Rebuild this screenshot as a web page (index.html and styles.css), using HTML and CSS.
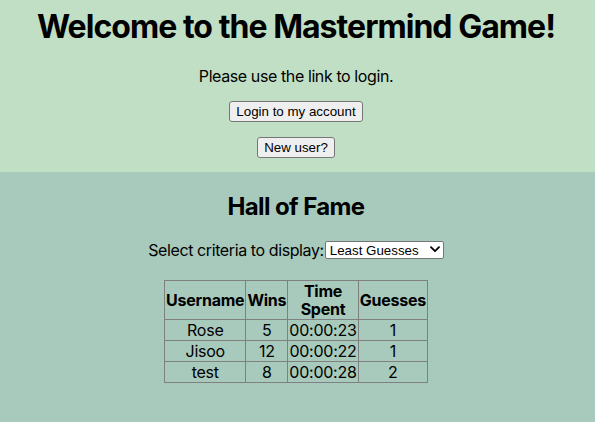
FILE: index.html
```html
<!DOCTYPE html>
<html lang="en">
<head>
<meta charset="utf-8">
<title>Mastermind</title>
<link rel="stylesheet" href="styles.css">
</head>
<body>
<div class="page">
  <header class="welcome">
    <h1 class="title">Welcome to the Mastermind Game!</h1>
    <p class="intro">Please use the link to login.</p>
    <button class="btn" type="button">Login to my account</button>
    <button class="btn" type="button">New user?</button>
  </header>
  <section class="fame">
    <h2 class="fame-title">Hall of Fame</h2>
    <div class="criteria">
      <label class="criteria-label" for="crit">Select criteria to display:</label>
      <span class="select-wrap">
        <select class="select" id="crit">
          <option>Least Guesses</option>
          <option>Most Wins</option>
          <option>Least Time</option>
        </select>
        <svg class="chev" width="10" height="7" viewBox="0 0 10 7" aria-hidden="true"><path d="M1 1.2 L5 5.2 L9 1.2" fill="none" stroke="#000" stroke-width="1.8" stroke-linecap="round" stroke-linejoin="round"/></svg>
      </span>
    </div>
    <table class="scores">
      <thead>
        <tr><th>Username</th><th>Wins</th><th>Time Spent</th><th>Guesses</th></tr>
      </thead>
      <tbody>
        <tr><td>Rose</td><td>5</td><td>00:00:23</td><td>1</td></tr>
        <tr><td>Jisoo</td><td>12</td><td>00:00:22</td><td>1</td></tr>
        <tr><td>test</td><td>8</td><td>00:00:28</td><td>2</td></tr>
      </tbody>
    </table>
  </section>
</div>
</body>
</html>
```

FILE: styles.css
```css
html, body {
  margin: 0;
  padding: 0;
  height: 100%;
}
body {
  font-family: Inter, "Noto Sans", sans-serif;
  font-size: 16px;
  letter-spacing: -0.025em;
  color: #000;
  background: #a8cabc;
}
.page {
  display: flex;
  flex-direction: column;
  min-height: 100%;
}
.welcome {
  background: #c1dfc5;
  display: flex;
  flex-direction: column;
  align-items: center;
  gap: 15px;
  padding: 7px 3px 14px 0;
}
.title {
  margin: 0 0 6px;
  font-size: 32px;
  font-weight: 700;
  letter-spacing: -0.03em;
  line-height: 39px;
}
.intro {
  margin: 0;
  line-height: 19px;
}
.btn {
  font-family: "Liberation Sans", Arial, sans-serif;
  font-size: 13.33px;
  letter-spacing: 0;
  color: #000;
  background: #efefef;
  border: 1px solid #767676;
  border-radius: 3px;
  padding: 1px 6px;
  height: 21px;
  line-height: 17px;
}
.fame {
  flex: 1;
  display: flex;
  flex-direction: column;
  align-items: center;
  padding: 20px 3px 0 0;
}
.fame-title {
  margin: 0 0 19px;
  font-size: 24px;
  font-weight: 700;
  letter-spacing: -0.025em;
  line-height: 29px;
}
.criteria {
  display: flex;
  align-items: center;
  height: 20px;
  margin-bottom: 20px;
}
.criteria-label {
  line-height: 19px;
}
.select-wrap {
  position: relative;
  display: inline-flex;
  margin-left: 1px;
}
.select {
  appearance: none;
  -webkit-appearance: none;
  font-family: "Liberation Sans", Arial, sans-serif;
  font-size: 13.33px;
  letter-spacing: 0;
  color: #000;
  background: #fff;
  border: 1px solid #767676;
  border-radius: 2px;
  width: 119px;
  height: 18px;
  padding: 0 20px 0 4px;
  margin: 0;
}
.chev {
  position: absolute;
  right: 4px;
  top: 5px;
  pointer-events: none;
}
.scores {
  border-collapse: collapse;
  width: min-content;
  border: 1px solid #808080;
}
.scores th,
.scores td {
  border: 1px solid #808080;
  padding: 1px;
  text-align: center;
  line-height: 18px;
  letter-spacing: -0.015em;
}
.scores th {
  font-weight: 700;
}
```
